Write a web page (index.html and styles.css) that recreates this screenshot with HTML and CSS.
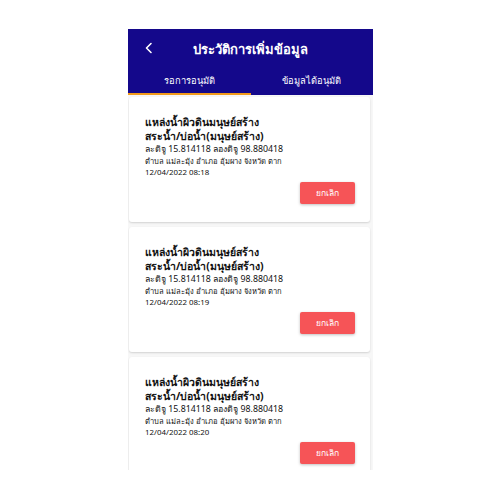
FILE: index.html
```html
<!DOCTYPE html>
<html lang="th">
<head>
<meta charset="utf-8">
<link rel="stylesheet" href="styles.css">
</head>
<body>
<div class="phone">
  <header class="header">
    <div class="topbar">
      <svg class="back" width="10" height="12" viewBox="0 0 10 12"><path d="M7 1.5 L2.5 6 L7 10.5" fill="none" stroke="#fff" stroke-width="1.6" stroke-linecap="round" stroke-linejoin="round"/></svg>
      <h1 class="title">ประวัติการเพิ่มข้อมูล</h1>
      <span class="spacer"></span>
    </div>
    <nav class="tabs">
      <div class="tab active">รอการอนุมัติ</div>
      <div class="tab">ข้อมูลได้อนุมัติ</div>
    </nav>
  </header>
  <main class="list">
    <div class="card">
      <div class="name">แหล่งน้ำผิวดินมนุษย์สร้าง<br>สระน้ำ/บ่อน้ำ(มนุษย์สร้าง)</div>
      <div class="coords">ละติจู 15.814118 ลองติจู 98.880418</div>
      <div class="addr">ตำบล แม่ละมุ้ง อำเภอ อุ้มผาง จังหวัด ตาก</div>
      <div class="date">12/04/2022 08:18</div>
      <div class="actions"><button class="cancel">ยกเลิก</button></div>
    </div>
    <div class="card">
      <div class="name">แหล่งน้ำผิวดินมนุษย์สร้าง<br>สระน้ำ/บ่อน้ำ(มนุษย์สร้าง)</div>
      <div class="coords">ละติจู 15.814118 ลองติจู 98.880418</div>
      <div class="addr">ตำบล แม่ละมุ้ง อำเภอ อุ้มผาง จังหวัด ตาก</div>
      <div class="date">12/04/2022 08:19</div>
      <div class="actions"><button class="cancel">ยกเลิก</button></div>
    </div>
    <div class="card">
      <div class="name">แหล่งน้ำผิวดินมนุษย์สร้าง<br>สระน้ำ/บ่อน้ำ(มนุษย์สร้าง)</div>
      <div class="coords">ละติจู 15.814118 ลองติจู 98.880418</div>
      <div class="addr">ตำบล แม่ละมุ้ง อำเภอ อุ้มผาง จังหวัด ตาก</div>
      <div class="date">12/04/2022 08:20</div>
      <div class="actions"><button class="cancel">ยกเลิก</button></div>
    </div>
  </main>
</div>
</body>
</html>
```
FILE: styles.css
```css
* { box-sizing: border-box; }
html, body { margin: 0; padding: 0; background: #fff; }
body { font-family: "Noto Sans", "DejaVu Sans", sans-serif; color: #111; }
.phone {
  margin: 29px 0 0 128px;
  width: 245px;
  height: 441px;
  overflow: hidden;
  background: #f7f7f7;
}
.header { background: #14088b; color: #fff; }
.topbar {
  height: 37px;
  display: flex;
  align-items: center;
  padding: 0 16px;
}
.back { flex: none; width: 10px; margin-top: 1px; }
.spacer { flex: none; width: 10px; }
.title {
  flex: 1;
  text-align: center;
  margin: 0;
  font-size: 13px;
  font-weight: 700;
  line-height: 18px;
  padding-top: 3px;
}
.tabs { display: flex; height: 29px; }
.tab {
  flex: 1;
  display: flex;
  align-items: center;
  justify-content: center;
  font-size: 9.3px;
  padding-top: 1px;
  border-bottom: 2px solid transparent;
}
.tab.active { border-bottom-color: #f29a1b; }
.list {
  display: flex;
  flex-direction: column;
  gap: 5px;
  padding: 2px 3px 0 1px;
}
.card {
  background: #fff;
  border-radius: 3px;
  box-shadow: 0 1px 2px rgba(0,0,0,0.15);
  padding: 18px 15px 0 16px;
  height: 125px;
  flex: none;
}
.name { font-size: 10.5px; font-weight: 700; line-height: 14px; }
.coords { font-size: 8.8px; line-height: 12px; margin-top: 0; }
.addr { font-size: 7.6px; line-height: 11px; margin-top: 1px; }
.date { font-size: 7.9px; line-height: 11px; }
.actions { display: flex; justify-content: flex-end; margin-top: 4px; }
.cancel {
  font-family: inherit;
  background: #f65457;
  color: #fff;
  border: none;
  border-radius: 2px;
  width: 55px;
  height: 22px;
  font-size: 8.5px;
  box-shadow: 0 1px 3px rgba(0,0,0,0.25);
  padding: 0;
}
```
